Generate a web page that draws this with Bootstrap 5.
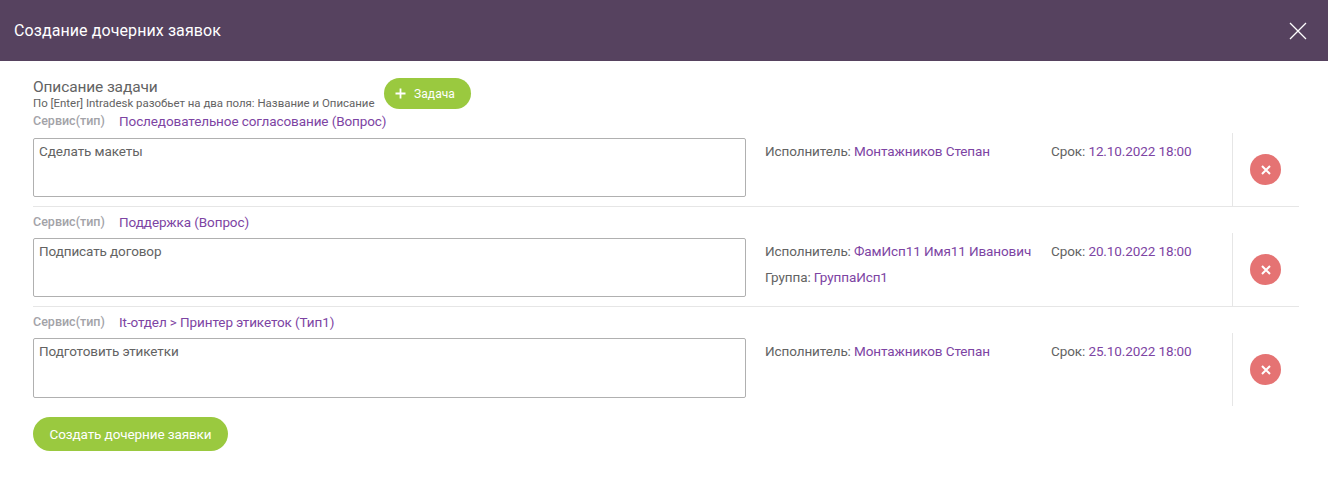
<!DOCTYPE html>
<html lang="ru">
<head>
<meta charset="utf-8">
<title>Создание дочерних заявок</title>
<link rel="stylesheet" href="https://cdn.jsdelivr.net/npm/bootstrap@5.3.0/dist/css/bootstrap.min.css">
<style>
body{font-family:Roboto,"Liberation Sans",sans-serif;color:#636363;font-size:13.5px;letter-spacing:-.1px;background:#fff;overflow:hidden}
.dlg-head{height:61px;background:#56425f;color:#fff;padding:0 20px 0 14px}
.dlg-title{font-size:16px;font-weight:400;line-height:20px;letter-spacing:.09px}
.dlg-close{width:30px;height:30px;background:none;border:0;padding:0;margin-right:-5px}
.dlg-body{padding:17px 29px 0 33px}
.intro{height:44px}
.intro-title{font-size:15.5px;line-height:18px;letter-spacing:-.13px}
.intro-sub{font-size:11.44px;line-height:14px;letter-spacing:0}
.btn-green{background:#9ac93f;color:#fff;border:0;border-radius:17px;font-weight:400}
.btn-green:hover{background:#9ac93f;color:#fff}
.btn-task{width:87px;height:31px;font-size:12px;margin-left:9px;padding:0 4px 0 0;letter-spacing:.05px}
.btn-create{width:195px;height:34px;font-size:13.5px;letter-spacing:-.1px;padding:0;margin-top:10px}
.task-row{height:100px;border-bottom:1px solid #e6e6e6;padding-top:5px}
.task-row.last{border-bottom:0}
.first-row{height:96px;padding-top:0;margin-top:-11px}
.svc-line{height:20px;line-height:20px}
.first-row .svc-line{height:21px}
.svc-label{width:86px;font-size:12.5px;font-weight:500;letter-spacing:0;color:#a3a3a8;flex:none}
.accent{color:#7d44a3}
.task-area{width:713px;height:59px;border:1px solid #b0b0b0;border-radius:2px;padding:4px 5px;font-size:13.5px;letter-spacing:-.1px;line-height:16px;color:#636363;resize:none;outline:0;display:block;margin-top:6px;background:#fff;flex:none}
.last .task-area{height:60px}
.info{width:286px;margin-left:19px;padding-top:10px;flex:none}
.info-line{line-height:18px;height:18px;white-space:nowrap}
.info-line+.info-line{margin-top:8px}
.term{width:181px;padding-top:10px;flex:none;white-space:nowrap;line-height:18px}
.del-cell{width:67px;border-left:1px solid #e6e6e6;height:73px;margin-top:1px;flex:none}
.del-btn{width:31px;height:31px;border-radius:50%;background:#e57373;border:0;padding:0;margin-left:17px;margin-top:21px}
</style>
</head>
<body>
<header class="dlg-head d-flex align-items-center justify-content-between">
  <div class="dlg-title">Создание дочерних заявок</div>
  <button class="dlg-close d-flex align-items-center justify-content-center" type="button" aria-label="Закрыть">
    <svg width="18" height="18" viewBox="0 0 18 18"><path d="M1 1L17 17M17 1L1 17" stroke="#fff" stroke-width="1.3" fill="none"/></svg>
  </button>
</header>
<main class="dlg-body">
  <section class="intro d-flex">
    <div>
      <div class="intro-title">Описание задачи</div>
      <div class="intro-sub">По [Enter] Intradesk разобьет на два поля: Название и Описание</div>
    </div>
    <button class="btn btn-green btn-task d-flex align-items-center justify-content-center gap-1" type="button">
      <svg class="me-1" width="11" height="11" viewBox="0 0 11 11"><path d="M5.5 .5V10.5M.5 5.5H10.5" stroke="#fff" stroke-width="1.8" fill="none"/></svg>
      <span>Задача</span>
    </button>
  </section>

  <section class="task-row first-row">
    <div class="svc-line d-flex"><span class="svc-label">Сервис(тип)</span><span class="accent">Последовательное согласование (Вопрос)</span></div>
    <div class="d-flex">
      <textarea class="task-area">Сделать макеты</textarea>
      <div class="info"><div class="info-line">Исполнитель: <span class="accent">Монтажников Степан</span></div></div>
      <div class="term">Срок: <span class="accent">12.10.2022 18:00</span></div>
      <div class="del-cell"><button class="del-btn d-flex align-items-center justify-content-center" type="button" aria-label="Удалить"><svg width="10" height="10" viewBox="0 0 10 10"><path d="M1 1L9 9M9 1L1 9" stroke="#fff" stroke-width="2" fill="none"/></svg></button></div>
    </div>
  </section>

  <section class="task-row">
    <div class="svc-line d-flex"><span class="svc-label">Сервис(тип)</span><span class="accent">Поддержка (Вопрос)</span></div>
    <div class="d-flex">
      <textarea class="task-area">Подписать договор</textarea>
      <div class="info"><div class="info-line">Исполнитель: <span class="accent">ФамИсп11 Имя11 Иванович</span></div><div class="info-line">Группа: <span class="accent">ГруппаИсп1</span></div></div>
      <div class="term">Срок: <span class="accent">20.10.2022 18:00</span></div>
      <div class="del-cell"><button class="del-btn d-flex align-items-center justify-content-center" type="button" aria-label="Удалить"><svg width="10" height="10" viewBox="0 0 10 10"><path d="M1 1L9 9M9 1L1 9" stroke="#fff" stroke-width="2" fill="none"/></svg></button></div>
    </div>
  </section>

  <section class="task-row last">
    <div class="svc-line d-flex"><span class="svc-label">Сервис(тип)</span><span class="accent">It-отдел &gt; Принтер этикеток (Тип1)</span></div>
    <div class="d-flex">
      <textarea class="task-area">Подготовить этикетки</textarea>
      <div class="info"><div class="info-line">Исполнитель: <span class="accent">Монтажников Степан</span></div></div>
      <div class="term">Срок: <span class="accent">25.10.2022 18:00</span></div>
      <div class="del-cell"><button class="del-btn d-flex align-items-center justify-content-center" type="button" aria-label="Удалить"><svg width="10" height="10" viewBox="0 0 10 10"><path d="M1 1L9 9M9 1L1 9" stroke="#fff" stroke-width="2" fill="none"/></svg></button></div>
    </div>
  </section>

  <button class="btn btn-green btn-create" type="button">Создать дочерние заявки</button>
</main>
<script src="https://cdn.jsdelivr.net/npm/bootstrap@5.3.0/dist/js/bootstrap.bundle.min.js"></script>
</body>
</html>
